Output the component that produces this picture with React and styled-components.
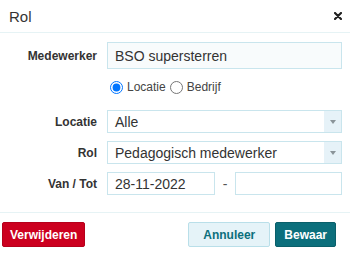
import React from 'react';
import styled, { createGlobalStyle } from 'styled-components';

const GlobalStyle = createGlobalStyle`
  html, body {
    margin: 0;
    padding: 0;
    background: #fff;
    font-family: "Liberation Sans", Arial, sans-serif;
    color: #333;
  }
`;

const teal = '#0c6f7c';
const lineColor = '#c9e5ed';

const Dialog = styled.div`
  width: 350px;
  height: 259px;
  background: #fff;
  display: flex;
  flex-direction: column;
`;

const Header = styled.header`
  height: 33px;
  box-sizing: border-box;
  padding: 0 7px 0 9px;
  display: flex;
  align-items: center;
  justify-content: space-between;
  border-bottom: 1px solid #e6f3f5;

  h2 {
    margin: 0;
    font-size: 15px;
    font-weight: normal;
    color: #333;
  }
`;

const Close = styled.button`
  border: 0;
  background: none;
  padding: 0;
  width: 10px;
  height: 10px;
  display: flex;
  align-items: center;
  justify-content: center;
  cursor: pointer;
`;

const Body = styled.section`
  padding: 8px 8px 17px 0;
  border-bottom: 1px solid #e6f3f5;
`;

const Row = styled.div`
  display: flex;
  align-items: center;
  margin-top: ${(p) => p.$gap || 8}px;
  height: ${(p) => p.$height || 23}px;
`;

const Label = styled.label`
  width: 97px;
  flex: none;
  text-align: right;
  font-size: 12px;
  font-weight: bold;
  color: #333;
  margin-right: 10px;
`;

const Input = styled.input`
  flex: ${(p) => (p.$width ? 'none' : 1)};
  width: ${(p) => (p.$width ? `${p.$width}px` : 'auto')};
  min-width: 0;
  height: 100%;
  box-sizing: border-box;
  border: 1px solid ${lineColor};
  border-radius: 0;
  background: ${(p) => (p.readOnly ? '#f8fbfc' : '#fff')};
  padding: 0 7px;
  font-family: inherit;
  font-size: 14px;
  color: #333;
  outline: none;
`;

const SelectBox = styled.div`
  flex: 1;
  height: 100%;
  box-sizing: border-box;
  border: 1px solid ${lineColor};
  display: flex;
  align-items: center;
  font-size: 14px;
  color: #333;

  span {
    flex: 1;
    padding-left: 7px;
  }
`;

const Arrow = styled.div`
  width: 17px;
  height: 100%;
  background: #e6f2f8;
  display: flex;
  align-items: center;
  justify-content: center;

  &::after {
    content: '';
    border-left: 3px solid transparent;
    border-right: 3px solid transparent;
    border-top: 4px solid #8a9499;
  }
`;

const Radios = styled.div`
  display: flex;
  align-items: center;
  margin-left: 108px;
  font-size: 12px;
  color: #444;

  label {
    display: flex;
    align-items: center;
    margin-right: 2px;
  }

  input {
    margin: 0 4px 0 2px;
    width: 13px;
    height: 13px;
  }
`;

const Dash = styled.span`
  width: 20px;
  text-align: center;
  font-size: 14px;
  color: #555;
`;

const Footer = styled.footer`
  display: flex;
  align-items: center;
  padding: 9px 14px 0 2px;
  gap: 5px;
`;

const Spacer = styled.div`
  flex: 1;
`;

const Button = styled.button`
  height: 25px;
  box-sizing: border-box;
  padding: 0 ${(p) => p.$pad || 8}px;
  font-family: inherit;
  font-size: 12px;
  font-weight: bold;
  border-radius: 2px;
  cursor: pointer;
  border: 1px solid ${(p) =>
    p.$kind === 'danger' ? '#b5001b' : p.$kind === 'primary' ? '#0a5f6a' : '#b9dfe9'};
  background: ${(p) =>
    p.$kind === 'danger' ? '#cc001f' : p.$kind === 'primary' ? teal : '#e5f3f8'};
  color: ${(p) => (p.$kind === 'light' ? teal : '#fff')};
`;

const Select = ({ value }) => (
  <SelectBox>
    <span>{value}</span>
    <Arrow />
  </SelectBox>
);

export default function App() {
  return (
    <>
      <GlobalStyle />
      <Dialog>
        <Header>
          <h2>Rol</h2>
          <Close aria-label="Sluiten">
            <svg width="8" height="8" viewBox="0 0 8 8">
              <path d="M1 1 L7 7 M7 1 L1 7" stroke="#222" strokeWidth="2.2" strokeLinecap="round" />
            </svg>
          </Close>
        </Header>

        <Body>
          <Row $gap={1} $height={27}>
            <Label>Medewerker</Label>
            <Input readOnly value="BSO supersterren" />
          </Row>

          <Row $gap={8} $height={20}>
            <Radios>
              <label>
                <input type="radio" name="type" defaultChecked />
                Locatie
              </label>
              <label>
                <input type="radio" name="type" />
                Bedrijf
              </label>
            </Radios>
          </Row>

          <Row $gap={13}>
            <Label>Locatie</Label>
            <Select value="Alle" />
          </Row>

          <Row>
            <Label>Rol</Label>
            <Select value="Pedagogisch medewerker" />
          </Row>

          <Row>
            <Label>Van / Tot</Label>
            <Input $width={108} defaultValue="28-11-2022" />
            <Dash>-</Dash>
            <Input defaultValue="" />
          </Row>
        </Body>

        <Footer>
          <Button $kind="danger" $pad={7}>Verwijderen</Button>
          <Spacer />
          <Button $kind="light" $pad={14}>Annuleer</Button>
          <Button $kind="primary" $pad={8}>Bewaar</Button>
        </Footer>
      </Dialog>
    </>
  );
}
